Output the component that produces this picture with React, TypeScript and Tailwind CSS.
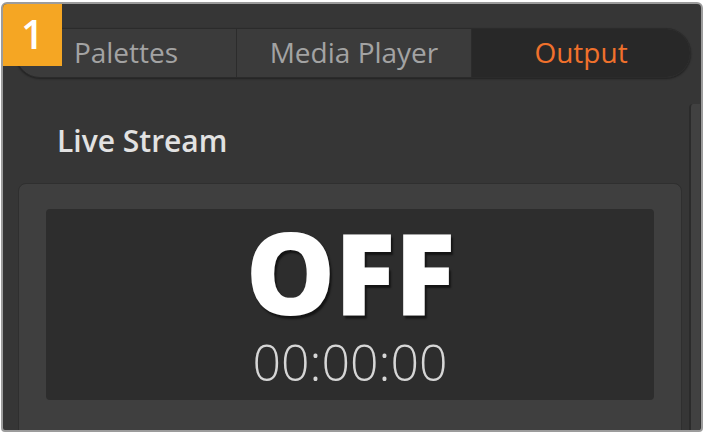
const tabs = [
  { label: 'Palettes', active: false, width: 'w-[220px]' },
  { label: 'Media Player', active: false, width: 'w-[235px]' },
  { label: 'Output', active: true, width: 'flex-1' },
]

const App = () => {
  return (
    <div className="h-[437px] w-[704px] bg-white pt-[2px] pl-[1px] font-['Open_Sans',sans-serif]">
      <div className="relative flex h-[430px] w-[702px] flex-col overflow-hidden rounded-t-[6px] rounded-b-[4px] border-2 border-[#9c9c9c] bg-[#363636]">
        <div className="absolute top-0 left-0 flex h-[62px] w-[59px] items-center justify-center bg-[#f5a623] pb-[2px] text-[40px] font-semibold text-white">
          1
        </div>

        <div className="mt-[24px] ml-[12px] flex h-[50px] w-[676px] shrink-0 overflow-hidden rounded-full border border-[#2b2b2b] bg-[#3b3b3b] shadow-[0_1px_2px_rgba(0,0,0,0.4)]">
          {tabs.map((t, i) => (
            <div
              key={t.label}
              className={
                'flex items-center justify-center pb-[2px] text-[28px] ' +
                t.width +
                (i > 0 ? ' border-l border-[#2c2c2c]' : '') +
                (t.active ? ' bg-[#282828] text-[#f0712c]' : ' text-[#a3a3a3]')
              }
            >
              {t.label}
            </div>
          ))}
        </div>

        <div className="flex shrink-0">
          <div className="flex flex-1 flex-col">
            <div className="mt-[43px] ml-[54px] shrink-0 text-[30px] leading-[40px] font-semibold text-[#e2e2e2]">
              Live Stream
            </div>
            <div className="mt-[22px] ml-[15px] flex h-[260px] w-[664px] shrink-0 flex-col rounded-t-[8px] border border-[#2f2f2f] bg-[#3f3f3f] px-[27px] pt-[25px]">
              <div className="flex h-[191px] shrink-0 flex-col items-center rounded-[4px] bg-[#2d2d2d]">
                <div className="mt-[2px] text-[113px] leading-[120px] font-extrabold tracking-[-1px] text-white [text-shadow:2px_3px_2px_rgba(0,0,0,0.55)]">
                  OFF
                </div>
                <div className="mt-[2px] text-[50px] leading-[58px] font-light text-[#d6d6d6]">
                  00:00:00
                </div>
              </div>
            </div>
          </div>
          <div className="mt-[26px] mr-[1px] ml-[6px] h-[340px] w-[11px] rounded-tl-[4px] border-l-2 border-[#2b2b2b] bg-[#414141]" />
        </div>
      </div>
    </div>
  )
}

export default App
